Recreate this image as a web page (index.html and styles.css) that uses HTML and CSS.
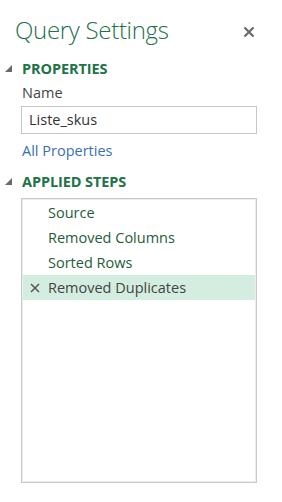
FILE: index.html
```html
<!DOCTYPE html>
<html>
<head>
<meta charset="utf-8">
<link rel="stylesheet" href="styles.css">
</head>
<body>
<div class="pane">
  <div class="header">
    <h1 class="title">Query Settings</h1>
    <span class="close" aria-label="Close">
      <svg width="12" height="12" viewBox="0 0 12 12"><path d="M1.5 1.5 L10.5 10.5 M10.5 1.5 L1.5 10.5" stroke="#6e6e6e" stroke-width="2.4" stroke-linecap="butt"/></svg>
    </span>
  </div>
  <div class="section-head first"><span class="tri"></span>PROPERTIES</div>
  <div class="section-body">
    <div class="label">Name</div>
    <div class="input">Liste_skus</div>
    <div class="link">All Properties</div>
  </div>
  <div class="section-head"><span class="tri"></span>APPLIED STEPS</div>
  <div class="section-body">
    <div class="steps">
      <div class="step">Source</div>
      <div class="step">Removed Columns</div>
      <div class="step">Sorted Rows</div>
      <div class="step selected"><span class="del"><svg width="10" height="10" viewBox="0 0 10 10"><path d="M1 1 L9 9 M9 1 L1 9" stroke="#555" stroke-width="1.5"/></svg></span>Removed Duplicates</div>
    </div>
  </div>
</div>
</body>
</html>
```

FILE: styles.css
```css
html, body {
  margin: 0;
  padding: 0;
  background: #ffffff;
}
body {
  font-family: "Open Sans", "Noto Sans", sans-serif;
  color: #444;
}
.pane {
  width: 282px;
  height: 502px;
  box-sizing: border-box;
}
.header {
  display: flex;
  align-items: center;
  justify-content: space-between;
  box-sizing: border-box;
  padding: 9px 27px 0 15px;
  height: 51px;
}
.title {
  margin: 0;
  font-weight: 300;
  font-size: 24px;
  color: #217346;
  letter-spacing: -0.3px;
  line-height: 32px;
}
.close {
  display: flex;
  margin-top: 4px;
}
.section-head {
  display: flex;
  align-items: center;
  margin-top: 13px;
  padding-left: 5px;
  font-weight: 700;
  font-size: 14.5px;
  color: #217346;
  line-height: 18px;
  letter-spacing: -0.1px;
}
.section-head.first {
  margin-top: 9px;
}
.tri {
  width: 0;
  height: 0;
  border-left: 7px solid transparent;
  border-bottom: 7px solid #6a6a6a;
  margin-right: 10px;
  margin-top: -2px;
}
.section-body {
  padding: 0 25px 0 21px;
}
.label {
  font-size: 14.5px;
  line-height: 18px;
  margin-top: 6px;
  padding-left: 1px;
  color: #444;
}
.input {
  margin-top: 4px;
  height: 28px;
  box-sizing: border-box;
  border: 1px solid #c6c6c6;
  padding: 0 7px;
  font-size: 14.5px;
  line-height: 26px;
  color: #333;
}
.link {
  margin-top: 8px;
  padding-left: 1px;
  font-size: 14.5px;
  line-height: 18px;
  color: #3a6fb0;
}
.steps {
  margin-top: 7px;
  height: 285px;
  box-sizing: border-box;
  border: 1px solid #c8c8c8;
  box-shadow: inset 0 0 0 1px #ededed;
  padding: 1px 1px;
}
.step {
  display: flex;
  align-items: center;
  height: 25px;
  padding-left: 25px;
  font-size: 14.5px;
  color: #1f5c38;
}
.step.selected {
  background: #d3eee0;
  padding-left: 7px;
  color: #444;
}
.del {
  display: flex;
  width: 18px;
}
```
